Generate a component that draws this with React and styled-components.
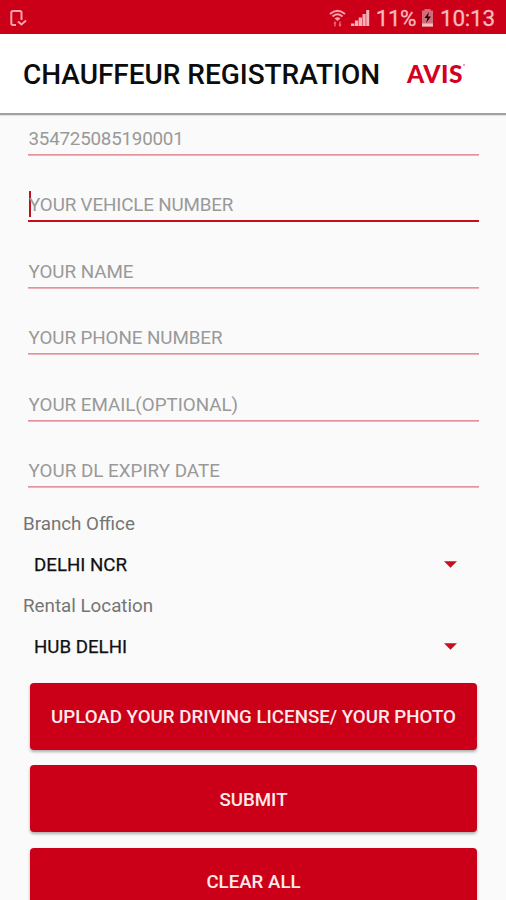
import React from 'react';
import styled, { createGlobalStyle } from 'styled-components';

const Global = createGlobalStyle`
  * { box-sizing: border-box; }
  body { margin: 0; background: #fafafa; font-family: Roboto, sans-serif; overflow: hidden; }
`;
const Screen = styled.div`
  width: 506px; height: 900px; overflow: hidden; background: #fafafa;
  display: flex; flex-direction: column;
`;
const StatusBar = styled.header`
  height: 34px; flex: none; background: #cb0018; color: #f7b9be;
  display: flex; align-items: center; justify-content: space-between; padding: 2px 11px 0 9px;
`;
const StatusGroup = styled.div`display: flex; align-items: center;`;
const StatusText = styled.span`
  font-size: 22.5px; line-height: 26px; white-space: nowrap; letter-spacing: ${p => p.$tracking || 0}px;
  -webkit-text-stroke: 0.3px #f7b9be;
`;
const StatusIcon = styled.svg`display: block; flex: none; margin-right: ${p => p.$gap || 0}px;`;
const AppBar = styled.div`
  height: 79px; flex: none; background: #fff; display: flex; align-items: center;
  justify-content: space-between; padding: 1px 41px 0 23px; position: relative; z-index: 1;
  box-shadow: 0 2px 0 #a0a0a0, 0 3px 1px #e4e4e4;
`;
const Title = styled.h1`
  margin: 0; font-size: 28px; font-weight: 500; color: #0c0c0c; white-space: nowrap; letter-spacing: -0.03px;
`;
const Brand = styled.div`
  display: flex; align-items: flex-start; color: #d3001f; font: 900 24.5px/26px Lato, sans-serif;
  letter-spacing: 0.5px;
`;
const BrandDot = styled.span`width: 2px; height: 2px; margin-top: 3px; border-radius: 1px; background: #e58a98;`;
const Form = styled.form`flex: none; display: flex; flex-direction: column;`;
const Fields = styled.div`height: 398.5px; margin: 0 27px 0 28px; display: flex; flex-direction: column;`;
const Field = styled.div`
  flex: none; height: ${p => p.$height}px; display: flex; flex-direction: column; justify-content: flex-end;
`;
const FieldText = styled.div`
  display: flex; align-items: center; height: 31px; padding-left: 0.5px; font-size: 18.8px; line-height: 26px;
  color: #999; letter-spacing: ${p => p.$tracking}px;
`;
const Underline = styled.div`
  height: 2px; background: ${p => (p.$focus ? '#c3101d' : 'linear-gradient(#e3919a 50%, #eab4b9 50%)')};
`;
const Caret = styled.span`width: 2px; height: 26px; margin: -1px -2px 0 0.5px; background: #c3101d;`;
const Label = styled.div`margin-left: 23px; font-size: 18.8px; line-height: 24px; color: #757575;`;
const Select = styled.div`
  height: 58.5px; padding: 0 49px 0 34px; display: flex; align-items: center;
  justify-content: space-between; font-size: 18.7px; color: #111; -webkit-text-stroke: 0.25px #111;
`;
const Arrow = styled.svg`display: block; width: 13px; height: 7px; margin-top: -1px;`;
const Actions = styled.div`display: flex; flex-direction: column; gap: 15.5px; padding: 6px 29px 0 30px;`;
const Button = styled.button`
  border: 0; height: 67px; padding: 2px 0 0; border-radius: 4px; background: #cb0018; color: #ffe9eb;
  font: 500 18.7px Roboto, sans-serif; box-shadow: 0 2px 3px rgba(0,0,0,.3); white-space: nowrap;
`;

const fields = [
  { text: '354725085190001', height: 43, tracking: -0.22 },
  { text: 'YOUR VEHICLE NUMBER', height: 66, tracking: -0.15, focus: true },
  { text: 'YOUR NAME', height: 67, tracking: -0.03 },
  { text: 'YOUR PHONE NUMBER', height: 66, tracking: -0.07 },
  { text: 'YOUR EMAIL(OPTIONAL)', height: 67, tracking: -0.02 },
  { text: 'YOUR DL EXPIRY DATE', height: 66, tracking: 0.02 },
];

function Dropdown({ value }) {
  return (
    <Select>
      {value}
      <Arrow viewBox="0 0 13 7"><path d="M0 .3h13L6.5 6.7z" fill="#c7101d" /></Arrow>
    </Select>
  );
}

export default function App() {
  return (
    <Screen>
      <Global />
      <StatusBar>
        <StatusIcon width="19" height="19" viewBox="0 0 19 19" fill="none" stroke="#f5a5ac" strokeWidth="2">
          <path d="M12.5 11V3.5Q12.5 2 11 2H4Q2.3 2 2.3 3.5V14Q2.3 16 4 16H7" />
          <path d="M9 12.5l3.5 3L17 11.5" />
        </StatusIcon>
        <StatusGroup>
          <StatusIcon $gap={5} width="17" height="19" viewBox="0 0 17 19" fill="none" stroke="#f5a5ac" strokeWidth="2">
            <path d="M1 5Q8.5-1.5 16 5M3.5 7.5Q8.5 3 13.5 7.5" />
            <path d="M5.5 9.5Q8.5 7 11.5 9.5L8.5 12z" fill="#f5a5ac" stroke="none" />
            <path d="M6 12.5v5M11 12.5v5M4.8 14h2.4M9.8 16h2.4" strokeWidth="1.2" opacity=".75" />
          </StatusIcon>
          <StatusIcon $gap={6} width="19" height="18" viewBox="0 0 19 18" fill="#f5b2b8">
            <path d="M0 14.5h3.4V17H0zM3.9 11.5h3.3V17H3.9zM7.7 8.5H11V17H7.7zM11.5 5h3.2v12h-3.2zM15.2 1h3v16h-3z" />
          </StatusIcon>
          <StatusText $tracking={-0.55}>11%</StatusText>
          <StatusIcon $gap={6} width="18" height="18" viewBox="-5 0 18 18">
            <path d="M3.5 0h6v1.5H12v16H1v-16h2.5z" fill="#cf6e78" />
            <path d="M1 14.5h11v3H1z" fill="#f7bcc0" />
            <path d="M8 3L3.5 9h3L5 14l5-6.5H7z" fill="#240008" />
          </StatusIcon>
          <StatusText $tracking={-0.2}>10:13</StatusText>
        </StatusGroup>
      </StatusBar>
      <AppBar>
        <Title>CHAUFFEUR REGISTRATION</Title>
        <Brand>AVIS<BrandDot /></Brand>
      </AppBar>
      <Form>
        <Fields>
          {fields.map(f => (
            <Field key={f.text} $height={f.height}>
              <FieldText $tracking={f.tracking}>{f.focus && <Caret />}{f.text}</FieldText>
              <Underline $focus={f.focus} />
            </Field>
          ))}
        </Fields>
        <Label>Branch Office</Label>
        <Dropdown value="DELHI NCR" />
        <Label>Rental Location</Label>
        <Dropdown value="HUB DELHI" />
        <Actions>
          <Button>UPLOAD YOUR DRIVING LICENSE/ YOUR PHOTO</Button>
          <Button>SUBMIT</Button>
          <Button>CLEAR ALL</Button>
        </Actions>
      </Form>
    </Screen>
  );
}
